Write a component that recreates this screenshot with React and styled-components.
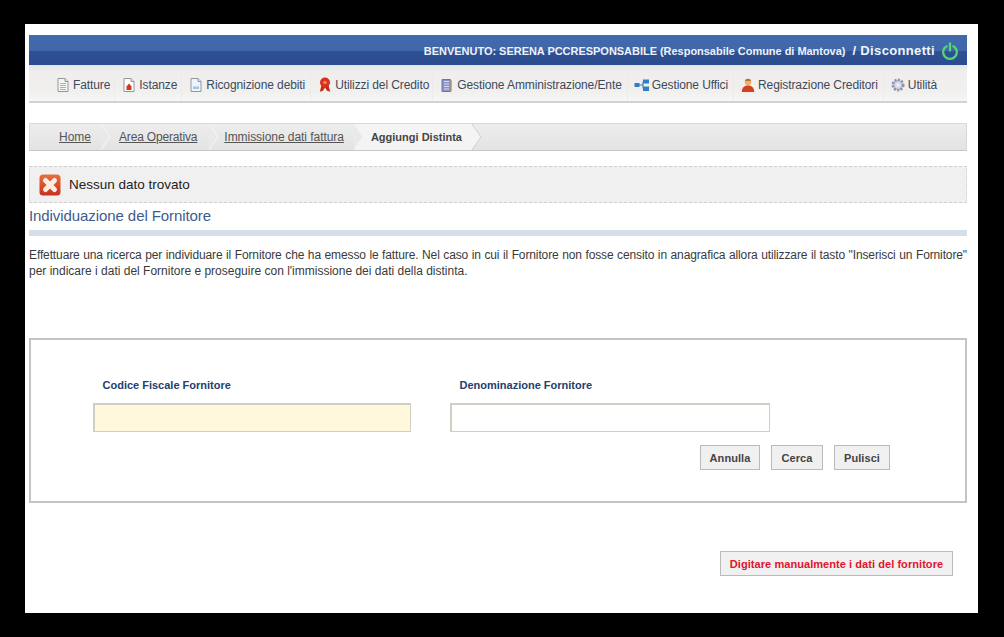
import React from "react";
import styled, { createGlobalStyle } from "styled-components";

const Global = createGlobalStyle`
  html, body { margin: 0; padding: 0; background: #000; }
  body { font-family: "Liberation Sans", Arial, sans-serif; }
  * { box-sizing: border-box; }
`;
const Screen = styled.div`
  width: 1004px; height: 637px; background: #000; padding: 24px 26px 24px 25px; overflow: hidden;
`;
const Page = styled.div`
  width: 953px; height: 589px; background: #fff; padding: 11px 11px 0 4px;
  display: flex; flex-direction: column;
`;
const Header = styled.div`
  height: 30px; display: flex; align-items: center; justify-content: flex-end; gap: 6px;
  padding-right: 8px; color: #eef2f8; border-top: 1px solid #4a6d9f;
  background: linear-gradient(#4169ab 0, #3f67aa 50%, #2f5094 52%, #2c4c90 100%);
`;
const Welcome = styled.span`font-size: 11px; font-weight: bold; letter-spacing: -0.03px;`;
const Logout = styled.span`font-size: 13px; font-weight: bold; color: #f2f5fa; letter-spacing: 0.35px; margin-left: 1px;`;
const Nav = styled.nav`
  height: 38px; display: flex; align-items: center; padding: 3px 0 0 20px;
  background: linear-gradient(#e2e5ea 0, #efeeed 20%, #f1f0ef 75%, #f7f7f6 100%);
  border-bottom: 2px solid #d2d2d2;
`;
const NavItem = styled.span`
  display: flex; align-items: center; gap: 2px; padding: 0 ${p => p.$pr ?? 5}px 0 6px; height: 100%;
  border-right: 1px solid #ebebea;
  font-size: 12px; letter-spacing: -0.1px; color: #3c4a5c; white-space: nowrap;
  &:last-child { border-right: none; }
`;
const Crumbs = styled.div`
  margin-top: 20px; height: 28px; display: flex; align-items: stretch;
  border: 1px solid #d8d8d8; border-bottom-color: #c8c8c8;
  background: linear-gradient(#ededed, #e3e3e3);
  font-size: 12px;
`;
const Crumb = styled.a`
  display: flex; align-items: center; padding: 0 ${p => p.$pr}px 0 ${p => p.$pl}px;
  color: #555; text-decoration: underline; white-space: nowrap; letter-spacing: ${p => p.$ls}px;
`;
const ActiveCrumb = styled.span`
  display: flex; align-items: center; padding: 0 10px 0 7px; font-size: 11px; font-weight: bold; color: #444; white-space: nowrap;
  background: #f4f4f4;
`;
const Notice = styled.div`
  margin-top: 15px; height: 37px; display: flex; align-items: center; gap: 8px; padding-left: 9px;
  background: #f0f0f0; border: 1px dashed #cfcfcf; border-left-style: dotted; border-right-style: dotted;
  font-size: 13.5px; color: #222;
`;
const Title = styled.h2`
  margin: 4px 0 0; font-weight: normal; font-size: 15px; line-height: 17px; letter-spacing: -0.08px; color: #3d5c8e;
`;
const Rule = styled.div`height: 6px; margin-top: 6px; background: #d5deeb;`;
const Para = styled.p`
  margin: 11px 0 0; font-size: 12px; line-height: 16px; color: #3a3a3a;
`;
const ParaLine = styled.span`
  display: block; white-space: nowrap; letter-spacing: ${p => p.$ls}px;
  ${p => p.$fill && "white-space: normal; text-align: justify; text-align-last: justify;"}
`;
const Box = styled.div`
  margin-top: 59px; height: 165px; border: 2px solid #c4c4c4;
  padding: 38px 0 0 62px; display: flex; flex-direction: column;
`;
const Fields = styled.div`display: flex; gap: 39px;`;
const Field = styled.div`display: flex; flex-direction: column; width: ${p => p.$w}px;`;
const Label = styled.label`
  font-size: 11px; font-weight: bold; color: #24406e; line-height: 14px; padding-left: 9.5px; margin-bottom: 11px;
`;
const Input = styled.input`
  height: 29px; width: 100%; background: ${p => p.$bg}; border: 2px solid #cfcfc4; border-right-width: 1px; border-bottom-width: 1px; outline: none;
`;
const Actions = styled.div`display: flex; gap: 11px; margin: 13px 0 0 607px;`;
const Btn = styled.button`
  height: 25px; width: ${p => p.$w}px; padding: 0; background: #f0f0f0; border: 1px solid #bbb;
  font: bold 11px "Liberation Sans", Arial, sans-serif; color: ${p => p.$c || "#444"}; letter-spacing: 0.06px;
`;
const Footer = styled.div`display: flex; justify-content: flex-end; padding-right: 14px; margin-top: 48px;`;

const S = ({ children }) => <svg width="16" height="16" viewBox="0 0 16 16" style={{ flex: "none" }}>{children}</svg>;
const Doc = ({ fill, accent }) => (
  <S><path d="M3 1.5h7l3 3v10H3z" fill={fill || "#f6f6f2"} stroke="#8d98a5" /><path d="M10 1.5v3h3" fill="#dfe3e8" stroke="#8d98a5" />{accent || <path d="M5 6.5h6M5 8.5h6M5 10.5h6M5 12.5h6" stroke="#a8b2bd" />}</S>
);
const Ribbon = () => (
  <S><path d="M4.5 8 2.8 14.800l3.200-1 2-3.300 2 3.300 3.200 1L11.500 8z" fill="#c72a1a" /><circle cx="8" cy="5.500" r="5" fill="#d8321f" /><circle cx="8" cy="5.500" r="1.800" fill="#ef8a5e" /></S>
);
const Db = () => (
  <S><path d="M3 2.500h8.500v12H3z" fill="#8d90c8" stroke="#7074ae" /><path d="M5 4.500h5M5 7h5M5 9.500h5M5 12h5" stroke="#d8daf0" /><path d="M11.500 2.500l1.500 1v11h-1.500z" fill="#c9b458" /></S>
);
const Tree = () => (
  <S><path d="M5 8h4M9 4.500v7" stroke="#3273b5" /><rect x="0.5" y="6" width="5" height="4" fill="#2f7fc7" /><rect x="9" y="2.500" width="6" height="4" fill="#2f7fc7" /><rect x="9" y="9.500" width="6" height="4.500" fill="#2f7fc7" /></S>
);
const Person = () => (
  <S><circle cx="8" cy="5" r="3.300" fill="#e8b36e" /><path d="M5 4c.5-3 5.500-3 6 0z" fill="#b4742a" /><path d="M1.800 15c0-5 3-6.500 6.200-6.500s6.200 1.500 6.200 6.500z" fill="#d4411f" /></S>
);
const Gear = () => (
  <S><circle cx="8" cy="8" r="5.200" fill="#bcc0d6" stroke="#8c90ad" strokeWidth="2.600" strokeDasharray="2 1.400" /><circle cx="8" cy="8" r="3.400" fill="#d5d8e8" /><circle cx="8" cy="8" r="1.600" fill="#f2f2f6" /></S>
);
const Power = () => (
  <svg width="18" height="18" viewBox="0 0 18 18" style={{ flex: "none" }}>
    <path d="M5.600 4.200a6.800 6.800 0 1 0 6.800 0" fill="none" stroke="#52d673" strokeWidth="2.300" strokeLinecap="round" />
    <path d="M9 1.500v7" stroke="#52d673" strokeWidth="2.300" strokeLinecap="round" />
  </svg>
);
const ErrorIcon = () => (
  <svg width="22" height="22" viewBox="0 0 22 22" style={{ flex: "none" }}>
    <defs><linearGradient id="err" x1="0" y1="0" x2="0" y2="1"><stop offset="0" stopColor="#e8703f" /><stop offset="1" stopColor="#c9301c" /></linearGradient></defs>
    <rect x="0.500" y="0.500" width="21" height="21" rx="3.500" fill="url(#err)" />
    <path d="M6.500 6.500l9 9M15.500 6.500l-9 9" stroke="#fbeee0" strokeWidth="5" strokeLinecap="round" />
  </svg>
);
const Chevron = ({ active, before }) => (
  <svg width="10" height="26" viewBox="0 0 10 26" style={{ flex: "none", background: before ? "#f4f4f4" : "none" }}>
    <path d="M0 0l9 13-9 13z" fill={active ? "#f4f4f4" : "#e9e9e9"} />
    <path d="M0 0l9 13-9 13" fill="none" stroke={active ? "#cfcfcf" : "#f6f6f6"} />
  </svg>
);

export default function App() {
  return (
    <Screen>
      <Global />
      <Page>
        <Header>
          <Welcome>BENVENUTO: SERENA PCCRESPONSABILE (Responsabile Comune di Mantova)</Welcome>
          <Logout>/ Disconnetti</Logout>
          <Power />
        </Header>
        <Nav>
          <NavItem $pr={4}><Doc />Fatture</NavItem>
          <NavItem $pr={4}><Doc fill="#fff" accent={<path d="M5.500 13V9.500L8 6.500l2.500 3V13z" fill="#d23a1a" />} />Istanze</NavItem>
          <NavItem><Doc fill="#eef4fb" accent={<path d="M5 12h6V9.500H5z" fill="#a9c4e2" />} />Ricognizione debiti</NavItem>
          <NavItem $pr={3}><Ribbon />Utilizzi del Credito</NavItem>
          <NavItem><Db />Gestione Amministrazione/Ente</NavItem>
          <NavItem><Tree />Gestione Uffici</NavItem>
          <NavItem><Person />Registrazione Creditori</NavItem>
          <NavItem><Gear />Utilità</NavItem>
        </Nav>
        <Crumbs>
          <Crumb href="#" $pl={29} $pr={10} $ls={0}>Home</Crumb>
          <Chevron />
          <Crumb href="#" $pl={8} $pr={12} $ls={-0.17}>Area Operativa</Crumb>
          <Chevron />
          <Crumb href="#" $pl={5} $pr={10} $ls={-0.05}>Immissione dati fattura</Crumb>
          <Chevron before />
          <ActiveCrumb>Aggiungi Distinta</ActiveCrumb>
          <Chevron active />
        </Crumbs>
        <Notice><ErrorIcon />Nessun dato trovato</Notice>
        <Title>Individuazione del Fornitore</Title>
        <Rule />
        <Para>
          <ParaLine $fill $ls={-0.12}>Effettuare una ricerca per individuare il Fornitore che ha emesso le fatture. Nel caso in cui il Fornitore non fosse censito in anagrafica allora utilizzare il tasto "Inserisci un Fornitore"</ParaLine>
          <ParaLine $ls={0}>per indicare i dati del Fornitore e proseguire con l'immissione dei dati della distinta.</ParaLine>
        </Para>
        <Box>
          <Fields>
            <Field $w={318}>
              <Label>Codice Fiscale Fornitore</Label>
              <Input $bg="#fff8dc" />
            </Field>
            <Field $w={320}>
              <Label>Denominazione Fornitore</Label>
              <Input $bg="#fff" />
            </Field>
          </Fields>
          <Actions>
            <Btn $w={60}>Annulla</Btn>
            <Btn $w={52}>Cerca</Btn>
            <Btn $w={56}>Pulisci</Btn>
          </Actions>
        </Box>
        <Footer><Btn $w={233} $c="#e0142c">Digitare manualmente i dati del fornitore</Btn></Footer>
      </Page>
    </Screen>
  );
}
